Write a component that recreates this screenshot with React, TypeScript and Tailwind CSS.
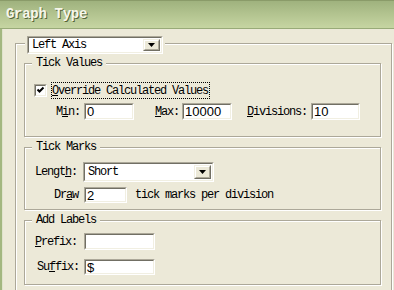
import React from "react";

const mono = "font-['Liberation_Mono','DejaVu_Sans_Mono',monospace] text-[12px] leading-[12px] tracking-[-1.2px] text-black";

function Sunken({
  className = "",
  children,
}: {
  className?: string;
  children?: React.ReactNode;
}) {
  return (
    <div
      className={`border border-t-[#aca899] border-l-[#aca899] border-b-white border-r-white ${className}`}
    >
      <div className="h-full w-full border border-t-[#716f64] border-l-[#716f64] border-b-[#f1efe2] border-r-[#f1efe2] bg-white">
        {children}
      </div>
    </div>
  );
}

function TextBox({ value = "", className = "" }: { value?: string; className?: string }) {
  return (
    <Sunken className={className}>
      <div className="flex h-full items-center pl-[1px] font-['Liberation_Sans',Arial,sans-serif] text-[13px] leading-none text-black">
        {value}
      </div>
    </Sunken>
  );
}

function DropButton() {
  return (
    <div className="border border-t-[#f1efe2] border-l-[#f1efe2] border-b-[#716f64] border-r-[#716f64] h-full w-[17px] bg-[#ece9d8]">
      <div className="flex h-full items-center justify-center border border-t-white border-l-white border-b-[#aca899] border-r-[#aca899]">
        <svg width="7" height="4" viewBox="0 0 7 4">
          <polygon points="0,0 7,0 3.5,4" fill="#000" />
        </svg>
      </div>
    </div>
  );
}

function Combo({ value, className = "" }: { value: string; className?: string }) {
  return (
    <Sunken className={className}>
      <div className="flex h-full items-stretch p-[1px]">
        <div className={`flex flex-1 items-center pl-[2px] ${mono}`}>{value}</div>
        <DropButton />
      </div>
    </Sunken>
  );
}

function Group({
  title,
  className = "",
  children,
}: {
  title: string;
  className?: string;
  children?: React.ReactNode;
}) {
  return (
    <div
      className={`relative border border-[#aca899] shadow-[inset_1px_1px_0_#fff,1px_1px_0_#fff] ${className}`}
    >
      <span className={`absolute left-[7px] top-[-7px] bg-[#ece9d8] px-[4px] ${mono}`}>
        {title}
      </span>
      {children}
    </div>
  );
}

function Label({ className = "", children }: { className?: string; children: React.ReactNode }) {
  return <span className={`shrink-0 ${mono} ${className}`}>{children}</span>;
}

export default function App() {
  return (
    <div className="h-[290px] w-[394px] overflow-hidden bg-[#ece9d8]">
      {/* Title bar */}
      <div className="flex h-[29px] items-center border-t border-b border-t-[#8a9b69] border-b-[#98aa78] bg-gradient-to-b from-[#9fb27e] via-[#b3c490] to-[#c6d5a2] pl-[6px]">
        <span className="font-['Liberation_Mono',monospace] text-[14px] font-bold tracking-[-0.3px] text-[#f6f6ea] [text-shadow:1px_1px_0_#55663a]">
          Graph Type
        </span>
      </div>

      <div className="flex">
        <div className="h-[261px] w-[2px] bg-[#a3b780]" />
        <div className="h-[261px] w-[1px] bg-[#dfe3cc]" />

        {/* Outer frame */}
        <div className="relative ml-[12px] mt-[14px] h-[260px] w-[377px] border border-[#aca899] shadow-[inset_1px_1px_0_#fff,1px_1px_0_#fff]">
          <div className="absolute left-[9px] top-[-8px] bg-[#ece9d8] px-[2px]">
            <Combo value="Left Axis" className="h-[18px] w-[136px]" />
          </div>

          <div className="pl-[8px] pt-[19px]">
            {/* Tick Values */}
            <Group title="Tick Values" className="h-[74px] w-[357px]">
              <div className="mt-[18px] flex h-[17px] items-center">
                <Sunken className="ml-[9px] h-[13px] w-[13px]">
                  <svg width="9" height="9" viewBox="0 0 9 9" className="block">
                    <polyline
                      points="1.5,3.5 3.5,5.5 7.5,1.5"
                      fill="none"
                      stroke="#000"
                      strokeWidth="2"
                    />
                  </svg>
                </Sunken>
                <div className="ml-[4px] flex h-[17px] w-[159px] items-center border border-dotted border-black">
                  <Label>
                    <span className="underline">O</span>verride Calculated Values
                  </Label>
                </div>
              </div>
              <div className="mt-[4px] flex h-[17px] items-center">
                <Label className="ml-[31px] w-[28px]">
                  M<span className="underline">i</span>n:
                </Label>
                <TextBox value="0" className="h-[17px] w-[50px]" />
                <Label className="ml-[21px] w-[27px]">
                  <span className="underline">M</span>ax:
                </Label>
                <TextBox value="10000" className="h-[17px] w-[50px]" />
                <Label className="ml-[15px] w-[64px]">
                  <span className="underline">D</span>ivisions:
                </Label>
                <TextBox value="10" className="h-[17px] w-[49px]" />
              </div>
            </Group>

            {/* Tick Marks */}
            <Group title="Tick Marks" className="mt-[10px] h-[63px] w-[357px]">
              <div className="mt-[14px] flex h-[20px] items-center">
                <Label className="ml-[10px] w-[48px]">
                  Lengt<span className="underline">h</span>:
                </Label>
                <Combo value="Short" className="h-[20px] w-[131px]" />
              </div>
              <div className="mt-[5px] flex h-[16px] items-center">
                <Label className="ml-[29px] w-[30px]">
                  Dr<span className="underline">a</span>w
                </Label>
                <TextBox value="2" className="h-[16px] w-[43px]" />
                <Label className="ml-[8px]">tick marks per division</Label>
              </div>
            </Group>

            {/* Add Labels */}
            <Group title="Add Labels" className="mt-[10px] h-[65px] w-[357px]">
              <div className="mt-[12px] flex h-[17px] items-center">
                <Label className="ml-[10px] w-[49px]">
                  <span className="underline">P</span>refix:
                </Label>
                <TextBox className="h-[17px] w-[71px]" />
              </div>
              <div className="mt-[9px] flex h-[16px] items-center">
                <Label className="ml-[12px] w-[47px]">
                  Su<span className="underline">f</span>fix:
                </Label>
                <TextBox value="$" className="h-[16px] w-[71px]" />
              </div>
            </Group>
          </div>
        </div>
      </div>
    </div>
  );
}
